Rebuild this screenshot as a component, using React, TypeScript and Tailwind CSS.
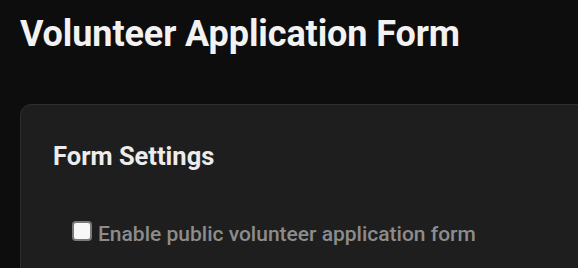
export default function App() {
  return (
    <div
      className="w-[578px] h-[268px] overflow-hidden bg-[#0d0d0d] text-white"
      style={{ fontFamily: "Roboto, 'Noto Sans', sans-serif" }}
    >
      <div className="pl-5 pt-[14px]">
        <h1 className="text-[36px] leading-[40px] font-bold text-[#f2f2f2] tracking-[-0.1px]">
          Volunteer Application Form
        </h1>
        <div className="mt-[50px] w-[640px] h-[200px] rounded-[11px] border border-[#2e2e2e] bg-[#1e1e1e] pl-8 pt-[35px]">
          <h2 className="text-[25.5px] leading-[32px] font-bold text-[#ececec]">Form Settings</h2>
          <label className="mt-[49px] ml-[19px] flex items-start gap-[6px]">
            <span className="w-[20px] h-[20px] rounded-[4px] bg-[#f7f7f7] border-2 border-[#7a7a7a] inline-block" />
            <span className="mt-[1px] text-[21px] leading-[25px] font-medium text-[#8c8c8c]">
              Enable public volunteer application form
            </span>
          </label>
        </div>
      </div>
    </div>
  );
}
